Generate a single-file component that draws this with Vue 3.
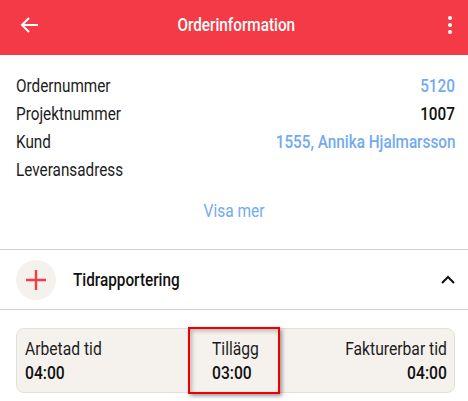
<script setup>
const rows = [
  { label: 'Ordernummer', value: '5120', link: true },
  { label: 'Projektnummer', value: '1007', link: false },
  { label: 'Kund', value: '1555, Annika Hjalmarsson', link: true },
  { label: 'Leveransadress', value: '', link: false }
];
</script>

<template>
  <div class="page">
    <header class="topbar">
      <svg class="back" viewBox="0 0 18 16" width="18" height="16">
        <path d="M18 8H2M9 1L2 8l7 7" fill="none" stroke="#fff" stroke-width="2" />
      </svg>
      <h1 class="title">Orderinformation</h1>
      <div class="more"><i></i><i></i><i></i></div>
    </header>

    <section class="info">
      <div v-for="row in rows" :key="row.label" class="row">
        <span class="narrow">{{ row.label }}</span>
        <span class="narrow value" :class="{ link: row.link }">{{ row.value }}</span>
      </div>
      <div class="show-more">Visa mer</div>
    </section>

    <section class="report-head">
      <div class="add">
        <svg viewBox="0 0 20 20" width="20" height="20">
          <path d="M10 0v20M0 10h20" fill="none" stroke="#f43b49" stroke-width="2.4" />
        </svg>
      </div>
      <span class="narrow report-title">Tidrapportering</span>
      <svg class="chevron" viewBox="0 0 14 9" width="14" height="9">
        <path d="M1 8l6-6 6 6" fill="none" stroke="#111" stroke-width="2" />
      </svg>
    </section>

    <div class="summary">
      <div class="cell">
        <span class="narrow">Arbetad tid</span>
        <strong class="narrow">04:00</strong>
      </div>
      <div class="cell middle">
        <span class="narrow">Tillägg</span>
        <strong class="narrow">03:00</strong>
      </div>
      <div class="cell end">
        <span class="narrow">Fakturerbar tid</span>
        <strong class="narrow">04:00</strong>
      </div>
      <div class="highlight"></div>
    </div>
  </div>
</template>

<style>
html, body { background: #fff; }
</style>

<style scoped>
.page {
  width: 468px;
  height: 401px;
  overflow: hidden;
  font-family: Roboto, sans-serif;
  font-size: 18px;
  color: #1c1c1c;
  background: #fff;
}
/* the reference text is a squeezed Roboto, no condensed cut is installed */
.narrow {
  display: inline-block;
  transform: scaleX(0.85);
  transform-origin: left center;
}
.topbar {
  height: 55px;
  padding: 0 16px 6px 20px;
  box-sizing: border-box;
  background: #f33a46;
  color: #fff;
  display: grid;
  grid-template-columns: 1fr auto 1fr;
  align-items: center;
}
.title {
  margin: 0;
  font-size: 18px;
  font-weight: 500;
  transform: scaleX(0.85);
}
.more {
  justify-self: end;
  display: flex;
  flex-direction: column;
  gap: 3px;
}
.more i { width: 4px; height: 4px; border-radius: 50%; background: #fff; }

.info {
  height: 195px;
  padding-top: 16px;
  box-sizing: border-box;
  border-bottom: 1px solid #cfcfcf;
}
.row {
  height: 28px;
  padding: 0 13px 0 16px;
  display: flex;
  align-items: center;
  justify-content: space-between;
}
.value { font-weight: 500; color: #111; transform-origin: right center; }
.value.link { color: #74aaf2; }
.show-more {
  margin-top: 17px;
  text-align: center;
  color: #74aaf2;
  transform: scaleX(0.86);
}

.report-head {
  height: 60px;
  padding: 0 13px 0 16px;
  box-sizing: border-box;
  border-bottom: 1px solid #cfcfcf;
  display: flex;
  align-items: center;
}
.add {
  width: 40px;
  height: 40px;
  border-radius: 50%;
  background: #f5f2ee;
  display: flex;
  align-items: center;
  justify-content: center;
}
.report-title {
  margin-left: 17px;
  font-weight: 500;
  color: #111;
}
.chevron { margin-left: auto; }

.summary {
  position: relative;
  margin: 18px 13px 0 16px;
  height: 65px;
  padding: 0 7px 0 8px;
  box-sizing: border-box;
  background: #f5f2ee;
  border: 1px solid #e2e0dc;
  border-radius: 8px;
  display: flex;
  align-items: center;
  justify-content: space-between;
}
.cell { display: flex; flex-direction: column; gap: 4px; line-height: 20px; }
.cell .narrow { transform: scaleX(0.87); }
.cell strong { font-weight: 500; color: #111; }
.cell.middle { position: absolute; left: 195px; }
.cell.end { text-align: right; }
.cell.end .narrow { transform-origin: right center; }
.highlight {
  position: absolute;
  left: 171px;
  top: -2px;
  width: 92px;
  height: 67px;
  box-sizing: border-box;
  border: 2px solid #ee0000;
  box-shadow: 2px 2px 4px rgba(0, 0, 0, 0.4), inset 2px 2px 4px rgba(0, 0, 0, 0.25);
}
</style>
